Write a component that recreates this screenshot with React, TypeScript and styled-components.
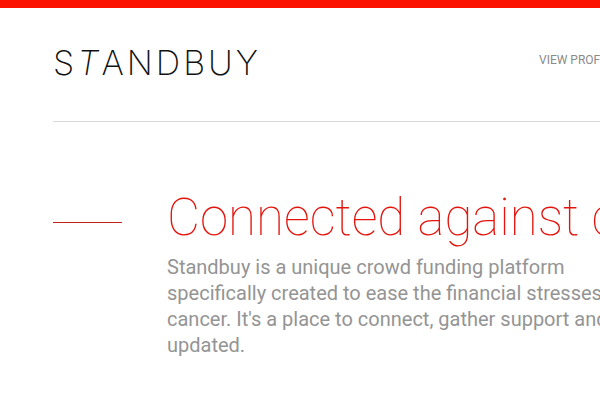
import React from "react";
import styled, { createGlobalStyle } from "styled-components";

const GlobalStyle = createGlobalStyle`
  * { box-sizing: border-box; }
  html, body { margin: 0; }
  body {
    background: #fff;
    color: #8a8a8a;
    font-family: Roboto, "Liberation Sans", sans-serif;
    overflow-x: hidden;
  }
`;

const Page = styled.div`
  min-width: 800px;
  border-top: 8px solid #fb1200;
  padding: 0 53px;
`;

const Header = styled.header`
  display: flex;
  align-items: center;
  height: 114px;
  padding-bottom: 12px;
  border-bottom: 1px solid #d8d8d8;
`;

const Logo = styled.a`
  flex: 0 0 486px;
  padding-top: 8px;
  color: #111;
  font-family: Inter, sans-serif;
  font-size: 34px;
  font-weight: 200;
  line-height: 40px;
  letter-spacing: 3px;
  text-decoration: none;
`;

const NavLink = styled.a`
  color: #8a8a8a;
  font-size: 12px;
  line-height: 16px;
  text-decoration: none;
  white-space: nowrap;
`;

const Intro = styled.main`
  display: grid;
  grid-template-columns: 69px 1fr;
  column-gap: 45px;
  padding-top: 64px;
`;

const Rule = styled.hr`
  width: 100%;
  margin: 36px 0 0;
  border: 0;
  border-top: 1px solid #c4201a;
`;

const Title = styled.h1`
  margin: 0 0 4px;
  color: #e2140c;
  font-size: 51px;
  font-weight: 100;
  line-height: 64px;
  white-space: nowrap;
`;

const Lead = styled.p`
  max-width: 490px;
  margin: 0;
  color: #949494;
  font-size: 20px;
  font-weight: 400;
  line-height: 26px;
`;

export default function App() {
  return (
    <>
      <GlobalStyle />
      <Page>
        <Header>
          <Logo href="#">
            S<em>T</em>ANDBUY
          </Logo>
          <nav>
            <NavLink href="#profiles">VIEW PROFILES</NavLink>
          </nav>
        </Header>
        <Intro>
          <Rule />
          <div>
            <Title>Connected against cancer</Title>
            <Lead>
              Standbuy is a unique crowd funding platform specifically created to
              ease the financial stresses of cancer. It's a place to connect,
              gather support and stay updated.
            </Lead>
          </div>
        </Intro>
      </Page>
    </>
  );
}
